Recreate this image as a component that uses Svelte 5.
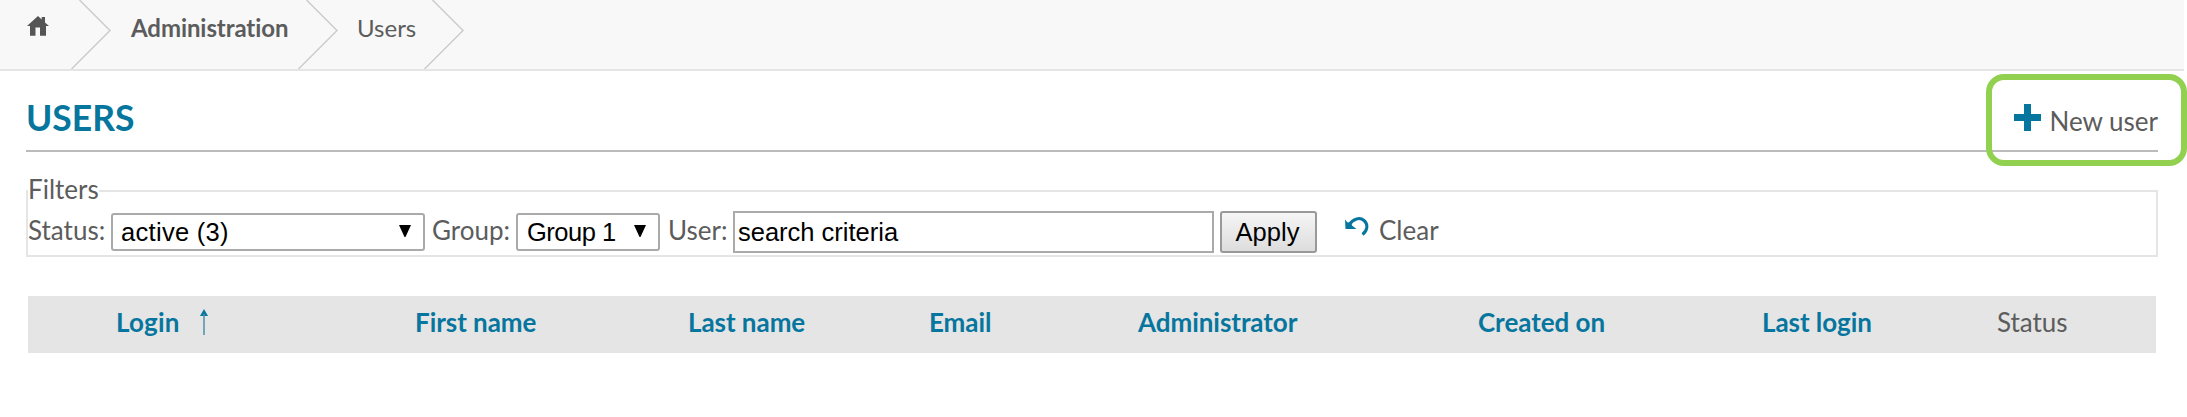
<script>
  const crumbs = [
    { label: 'Administration', kind: 'parent' },
    { label: 'Users', kind: 'current' }
  ];
  const columns = ['First name', 'Last name', 'Email', 'Administrator', 'Created on', 'Last login', 'Status'];
</script>

{#snippet chevron()}
  <svg class="chevron" width="42" height="69" viewBox="0 0 42 69">
    <path d="M8.5 0L39 30.5L.5 69" fill="none" stroke="#ccc" stroke-width="1.5" />
  </svg>
{/snippet}

<div class="page">
  <nav class="crumbs">
    <svg class="home" width="22" height="20" viewBox="0 0 22 20">
      <path d="M11 0L14.7 3.5V1H18V6.5L22 10H19V19.7H13V11.5H8.5V19.7H3V10H0Z" fill="#555" />
    </svg>
    {@render chevron()}
    {#each crumbs as crumb}
      <span class={crumb.kind}>{crumb.label}</span>
      {@render chevron()}
    {/each}
  </nav>

  <header class="heading">
    <h1>USERS</h1>
    <a class="new">
      <svg width="27" height="27" viewBox="0 0 27 27"><path d="M10 0H17V10H27V17H17V27H10V17H0V10H10Z" fill="#07769e" /></svg>
      <span>New user</span>
      <i class="ring"></i>
    </a>
  </header>

  <section class="filters">
    <div class="legend"><span>Filters</span></div>
    <div class="row">
      <span class="label status">Status:</span>
      <div class="select wide"><span>active (3)</span><svg width="12" height="12" viewBox="0 0 12 12"><path d="M0 0H12L6.5 12H5.5Z" /></svg></div>
      <span class="label group">Group:</span>
      <div class="select narrow"><span>Group 1</span><svg width="12" height="12" viewBox="0 0 12 12"><path d="M0 0H12L6.5 12H5.5Z" /></svg></div>
      <span class="label user">User:</span>
      <input value="search criteria" />
      <button>Apply</button>
      <svg class="undo" width="24" height="20" viewBox="0 0 24 20">
        <path d="M4.5 7.5C8 1.5 15 0 19 3.5C23.5 7.5 22.5 13.5 17.5 17.5" fill="none" stroke="#07769e" stroke-width="3" />
        <path d="M0 2.5L2.5 5.5L6 5L7 8.5L11.5 12H.5Z" fill="#07769e" />
      </svg>
      <span class="label">Clear</span>
    </div>
  </section>

  <div class="table">
    <span class="login">Login
      <svg width="8" height="26" viewBox="0 0 8 26"><path d="M4 0L8 7H0Z" fill="#07769e" /><path d="M4 5V26" stroke="#4d8ea8" stroke-width="1.5" /></svg>
    </span>
    {#each columns as name}
      <span class:plain={name === 'Status'}>{name}</span>
    {/each}
  </div>
</div>

<style>
  :global(body) { background: #fff; }
  .page {
    width: 2187px;
    height: 417px;
    overflow: hidden;
    font: 26px/32px Lato, sans-serif;
    font-variant-ligatures: none;
    color: #5c5c5c;
  }
  svg { display: block; flex: none; }
  .crumbs {
    box-sizing: border-box;
    width: 2184px;
    height: 71px;
    padding-left: 27px;
    display: flex;
    align-items: flex-start;
    background: #f8f8f8;
    border-bottom: 2px solid #e5e5e5;
    font-size: 24px;
    line-height: 56px;
  }
  .home { margin: 16px 22px 0 0; }
  .parent { width: 167px; margin-left: 18px; font-weight: 700; letter-spacing: -.08px; }
  .current { width: 67px; margin-left: 17px; }
  .parent, .current { white-space: nowrap; }
  .heading {
    box-sizing: border-box;
    height: 81px;
    margin: 0 29px 0 26px;
    border-bottom: 2px solid #bbb;
    display: flex;
    justify-content: space-between;
    align-items: flex-start;
  }
  h1 { margin: 25px 0 0; font-size: 35.5px; line-height: 43px; font-weight: 700; color: #07769e; }
  .new { position: relative; display: flex; margin-top: 33px; }
  .new span { margin-left: 8px; line-height: 34px; }
  .ring {
    position: absolute;
    left: -28px;
    top: -30px;
    width: 189px;
    height: 80px;
    border: 6px solid #92d050;
    border-radius: 18px;
  }
  .filters {
    box-sizing: border-box;
    height: 67px;
    margin: 38px 29px 0 26px;
    border: 2px solid #e5e5e5;
  }
  .legend { display: flex; align-items: flex-start; height: 21px; }
  .legend span { background: #fff; line-height: 34px; margin-top: -20px; }
  .row { display: flex; align-items: flex-start; height: 42px; }
  .label { line-height: 36px; margin-top: -1px; white-space: nowrap; }
  .status { width: 83px; }
  .group { width: 84px; margin-left: 7px; }
  .user { width: 65px; margin-left: 8px; }
  .select, input, button {
    box-sizing: border-box;
    font: 25.5px/34px "Liberation Sans", Arial, sans-serif;
    color: #000;
    border: 2px solid #aaa;
  }
  .select {
    height: 38px;
    display: flex;
    justify-content: space-between;
    border-radius: 3px;
    padding: 0 12px 0 8px;
    white-space: nowrap;
  }
  .select svg { margin-top: 10px; }
  .wide { width: 314px; }
  .wide span { letter-spacing: .3px; }
  .narrow { width: 144px; padding-left: 9px; }
  .narrow span { letter-spacing: -.5px; }
  input { width: 481px; height: 42px; padding: 0 3px; margin: -2px 6px 0 0; outline: none; }
  button {
    width: 97px;
    height: 42px;
    margin: -2px 28px 0 0;
    padding: 0 2px 0 0;
    border-color: #999;
    border-radius: 3px;
    background: linear-gradient(#f5f5f5, #ddd);
  }
  .undo { margin: 4px 10px 0 0; }
  .table {
    height: 57px;
    margin: 39px 31px 0 28px;
    padding-left: 88px;
    box-sizing: border-box;
    display: grid;
    grid-template-columns: 299px 273px 241px 209px 340px 284px 235px 1fr;
    background: #e5e5e5;
    color: #07769e;
    font-weight: 700;
    line-height: 53px;
    letter-spacing: -.05px;
  }
  .login { display: flex; letter-spacing: .2px; }
  .login svg { margin: 13px 0 0 20px; }
  .plain { color: #5c5c5c; font-weight: 400; }
</style>
